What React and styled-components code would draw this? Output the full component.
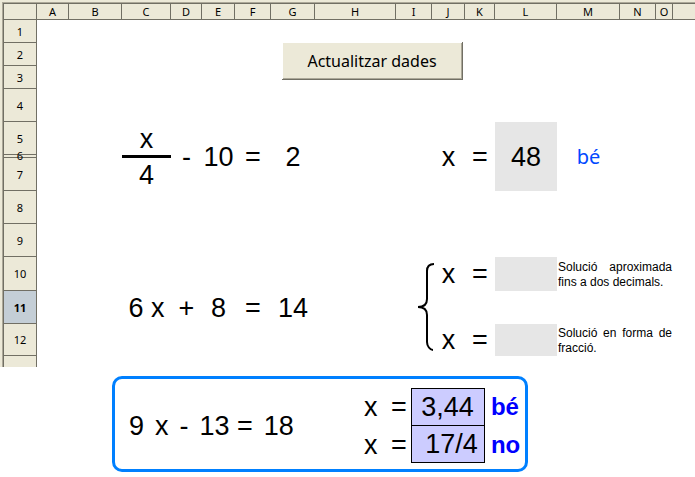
import React from "react";
import styled, { createGlobalStyle, css } from "styled-components";

const GlobalStyle = createGlobalStyle`
  * { box-sizing: border-box; }
  body {
    margin: 0;
    background: #fff;
    color: #000;
    font-family: "Liberation Sans", Arial, sans-serif;
  }
`;

const uiFont = css`
  font-family: "Noto Sans", Tahoma, sans-serif;
`;

const SheetFrame = styled.section`
  position: relative;
  border-left: 2px solid #ece9d8;
  border-top: 2px solid #ece9d8;
  overflow: hidden;
`;

const Sheet = styled.table`
  width: 100%;
  table-layout: fixed;
  border-collapse: separate;
  border-spacing: 0;
  border-style: solid;
  border-width: 1px 0 0 1px;
  border-color: #aca899;
`;

const Col = styled.col`
  width: ${(p) => (p.$w ? `${p.$w}px` : "auto")};
`;

const Row = styled.tr`
  height: ${(p) => p.$h}px;
`;

const Header = styled.th`
  ${uiFont}
  position: relative;
  padding: ${(p) => (p.$thin ? 0 : 1)}px 0 0;
  font-size: 11px;
  line-height: 14px;
  font-weight: ${(p) => (p.$current ? 700 : 400)};
  background: ${(p) => (p.$current ? "#c4ced6" : "#ece9d8")};
  border: 0 solid #716f64;
  border-right-width: ${(p) => (p.$last ? 0 : 1)}px;
  border-bottom-width: ${(p) => (p.$open ? 0 : 1)}px;
  border-left-width: ${(p) => (p.$edge ? 1 : 0)}px;
  border-top-width: ${(p) => (p.$top ? 1 : 0)}px;
`;

/* Label of a row that is thinner than its own text */
const ThinLabel = styled.span`
  position: absolute;
  left: 0;
  right: 0;
  top: 50%;
  transform: translateY(-50%);
  z-index: 1;
`;

const Cell = styled.td`
  padding: 0;
  text-align: center;
  vertical-align: middle;
  font-size: 27px;
  line-height: 30px;
  white-space: nowrap;
`;

const Bar = styled(Cell)`
  background: #000;
`;

const AnswerCell = styled(Cell)`
  background: #e6e6e6;
`;

const BraceCell = styled(Cell)`
  text-align: right;

  svg {
    display: inline-block;
    vertical-align: middle;
    overflow: visible;
  }
`;

const Verdict = styled(Cell)`
  ${uiFont}
  font-size: 20px;
  color: #0048ff;
`;

const Note = styled(Cell)`
  padding: 1px 1px 0;
  font-size: 12px;
  line-height: 15px;
  text-align: justify;
  white-space: normal;
`;

const AnswerInput = styled.input`
  display: block;
  width: 100%;
  height: 30px;
  padding: 0;
  border: 0;
  outline: 0;
  background: transparent;
  color: inherit;
  font: inherit;
  text-align: center;
`;

const UpdateButton = styled.button`
  ${uiFont}
  position: absolute;
  left: 280px;
  top: 40px;
  width: 181px;
  height: 38px;
  padding: 0;
  border: 0;
  border-right: 1px solid #716f64;
  border-bottom: 1px solid #716f64;
  background: #ece9d8;
  box-shadow: inset 1px 1px #fff, inset -1px -1px #aca899;
  color: #000;
  font-size: 16px;
  line-height: 20px;
`;

const Panel = styled.section`
  display: flex;
  align-items: center;
  gap: 70px;
  width: fit-content;
  margin: 9px 0 0 112px;
  padding: 9px 5px 6px 14px;
  border: 3px solid #0080ff;
  border-radius: 10px;
  font-size: 27px;
  line-height: 30px;
`;

const Equation = styled.div`
  display: flex;
  gap: 11px;
  white-space: nowrap;
`;

const Answers = styled.div`
  display: grid;
  grid-template-columns: 27px 20px 74px auto;
  grid-template-rows: 38px 37px;
  align-items: center;
`;

const Unknown = styled.label`
  white-space: nowrap;
`;

const Solution = styled.input`
  width: 74px;
  height: 100%;
  padding: 0 ${(p) => (p.$first ? 10 : 6)}px 0 0;
  border: 1px solid #000;
  border-top-width: ${(p) => (p.$first ? 1 : 0)}px;
  border-radius: 0;
  outline: 0;
  background: #ccccff;
  color: #000;
  font: inherit;
  text-align: right;
`;

const Mark = styled.strong`
  padding-left: 6px;
  font-size: 24px;
  color: #0000ff;
`;

const columns = [
  ["A", 32], ["B", 53], ["C", 49], ["D", 31], ["E", 33], ["F", 36],
  ["G", 44], ["H", 81], ["I", 36], ["J", 33], ["K", 30], ["L", 62],
  ["M", 63], ["N", 36], ["O", 17],
];

const rows = [
  [1, 23], [2, 23], [3, 23], [4, 33], [5, 33], [6, 3], [7, 33],
  [8, 33], [9, 33], [10, 34], [11, 33], [12, 32], ["", 11],
];

const cells = {
  5: (
    <>
      <Cell colSpan={2} />
      <Cell>x</Cell>
      <Cell rowSpan={3}>-</Cell>
      <Cell rowSpan={3}>10</Cell>
      <Cell rowSpan={3}>=</Cell>
      <Cell rowSpan={3}>2</Cell>
      <Cell rowSpan={3} colSpan={2} />
      <Cell rowSpan={3}>x</Cell>
      <Cell rowSpan={3}>=</Cell>
      <AnswerCell rowSpan={3}>
        <AnswerInput aria-label="x" defaultValue="48" />
      </AnswerCell>
      <Verdict rowSpan={3}>bé</Verdict>
    </>
  ),
  6: (
    <>
      <Cell colSpan={2} />
      <Bar />
    </>
  ),
  7: (
    <>
      <Cell colSpan={2} />
      <Cell>4</Cell>
    </>
  ),
  10: (
    <>
      <Cell colSpan={8} />
      <BraceCell rowSpan={3}>
        <svg width="16" height="90" viewBox="0 0 16 90" fill="none" stroke="#000" strokeWidth="2" aria-hidden="true">
          <path d="M18 2C13 2 11 5 11 9V37C11 42 8 45 2 45C8 45 11 48 11 53V80C11 84 14 88 17 88" />
        </svg>
      </BraceCell>
      <Cell>x</Cell>
      <Cell>=</Cell>
      <AnswerCell>
        <AnswerInput aria-label="Solució aproximada" />
      </AnswerCell>
      <Note colSpan={3}>Solució aproximada fins a dos decimals.</Note>
    </>
  ),
  11: (
    <>
      <Cell colSpan={2} />
      <Cell>6 x</Cell>
      <Cell>+</Cell>
      <Cell>8</Cell>
      <Cell>=</Cell>
      <Cell>14</Cell>
    </>
  ),
  12: (
    <>
      <Cell colSpan={8} />
      <Cell>x</Cell>
      <Cell>=</Cell>
      <AnswerCell>
        <AnswerInput aria-label="Solució en forma de fracció" />
      </AnswerCell>
      <Note colSpan={3}>Solució en forma de fracció.</Note>
    </>
  ),
};

export default function App() {
  return (
    <>
      <GlobalStyle />
      <main>
        <SheetFrame>
          <Sheet>
            <colgroup>
              <Col $w={34} />
              {columns.map(([name, width]) => (
                <Col key={name} $w={width} />
              ))}
              <Col />
            </colgroup>
            <thead>
              <Row $h={17}>
                <Header $edge $top />
                {columns.map(([name]) => (
                  <Header key={name} scope="col" $top>{name}</Header>
                ))}
                <Header $top $last />
              </Row>
            </thead>
            <tbody>
              {rows.map(([label, height]) => (
                <Row key={label} $h={height}>
                  <Header
                    scope="row"
                    $edge
                    $current={label === 11}
                    $thin={label === 6}
                    $open={label === ""}
                  >
                    {label === 6 ? <ThinLabel>{label}</ThinLabel> : label}
                  </Header>
                  {cells[label]}
                </Row>
              ))}
            </tbody>
          </Sheet>
          <UpdateButton type="button">Actualitzar dades</UpdateButton>
        </SheetFrame>

        <Panel>
          <Equation>
            <span>9</span>
            <span>x</span>
            <span>-</span>
            <span>13 =</span>
            <span>18</span>
          </Equation>
          <Answers>
            <Unknown htmlFor="decimal">x</Unknown>
            <span>=</span>
            <Solution id="decimal" $first defaultValue="3,44" />
            <Mark>bé</Mark>
            <Unknown htmlFor="fraction">x</Unknown>
            <span>=</span>
            <Solution id="fraction" defaultValue="17/4" />
            <Mark>no</Mark>
          </Answers>
        </Panel>
      </main>
    </>
  );
}
